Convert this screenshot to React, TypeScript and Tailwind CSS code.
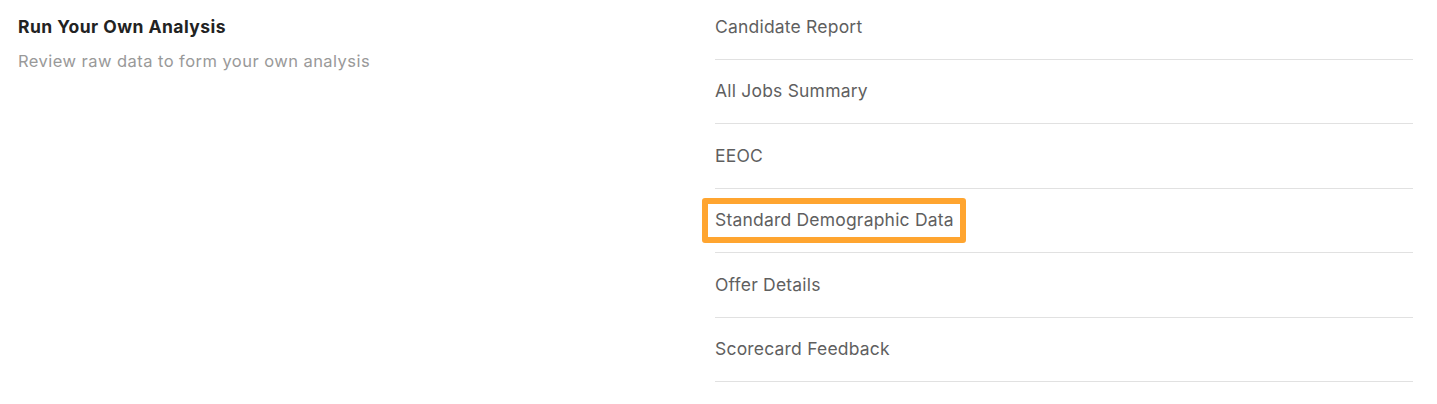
import React from 'react';

const reports = [
  'Candidate Report',
  'All Jobs Summary',
  'EEOC',
  'Standard Demographic Data',
  'Offer Details',
  'Scorecard Feedback',
];

export default function App() {
  return (
    <div className="w-[1437px] h-[404px] bg-white overflow-hidden flex font-['Inter',sans-serif]">
      <div className="w-[715px] pl-[18px] pt-[15px] shrink-0">
        <h2 className="text-[17.5px] leading-[24px] font-bold tracking-[0.45px] text-[#222222]">Run Your Own Analysis</h2>
        <p className="mt-[11px] text-[16.5px] leading-[22px] tracking-[0.45px] text-[#999999]">Review raw data to form your own analysis</p>
      </div>

      <div className="flex-1 mr-[24px] -mt-[5px]">
        {reports.map((name) => (
          <div key={name} className="h-[64.5px] flex items-center border-b border-[#e1e1e1]">
            <span className="relative text-[17.5px] leading-[24px] tracking-[0.2px] text-[#5f5f5f]">
              {name}
              {name === 'Standard Demographic Data' && (
                <span className="absolute -left-[13px] -right-[12px] -top-[10px] -bottom-[11px] border-[6px] border-[#ffa530] rounded-[3px]" />
              )}
            </span>
          </div>
        ))}
      </div>
    </div>
  );
}
